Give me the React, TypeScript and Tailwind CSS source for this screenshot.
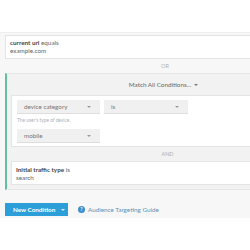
function Caret({ className = '' }: { className?: string }) {
  return <span className={`inline-block w-0 h-0 border-l-[2px] border-r-[2px] border-t-[2.5px] border-l-transparent border-r-transparent ${className}`} />;
}

function Select({ label, width }: { label: string; width: string }) {
  return (
    <div className={`${width} h-[14px] bg-[#f0f0f0] border-b border-[#dedede] flex items-center justify-between pl-[7px] pr-[9px] text-[#777]`}>
      <span>{label}</span>
      <Caret className="border-t-[#999]" />
    </div>
  );
}

export default function App() {
  return (
    <div className="w-[250px] h-[250px] overflow-hidden bg-white pt-[32px] text-[6.3px] leading-[8px] text-[#666]" style={{ fontFamily: 'Lato, "Open Sans", sans-serif' }}>
      <div className="w-[330px] bg-[#f7f7f7] border-t border-[#efefef] pl-[5px] pr-[5px] pt-[2px] h-[186px]">
        <div className="w-[320px]">
          {/* first condition */}
          <div className="bg-white border border-[#e4e4e4] h-[24px] px-[4px] pt-[3px]">
            <div><span className="font-bold text-[#444]">current url</span> equals</div>
            <div>example.com</div>
          </div>

          <div className="h-[14px] flex items-center justify-center text-[#b0b0b0] text-[5.5px]">OR</div>

          {/* match group */}
          <div className="bg-[#f2f2f2] border border-[#e6e6e6] border-l-[2px] border-l-[#62bfa0] pl-[4px] pb-[4px]">
            <div className="h-[21px] flex items-center justify-center gap-[3px] text-[#666] pr-[8px]">
              <span>Match All Conditions...</span>
              <Caret className="border-t-[#777]" />
            </div>
            <div className="bg-white border border-[#e4e4e4] px-[5px] pt-[4px] pb-[3px]">
              <div className="flex gap-[4px]">
                <Select label="device category" width="w-[83px]" />
                <Select label="is" width="w-[84px]" />
              </div>
              <div className="text-[4.8px] leading-[6px] text-[#b0b0b0] mt-[3px]">The user's type of device.</div>
              <div className="mt-[6px]">
                <Select label="mobile" width="w-[83px]" />
              </div>
            </div>
            <div className="h-[14px] flex items-center justify-center text-[#b0b0b0] text-[5.5px]">AND</div>
            <div className="bg-white border border-[#e4e4e4] h-[24px] px-[4px] pt-[4px]">
              <div><span className="font-bold text-[#444]">Initial traffic type</span> is</div>
              <div>search</div>
            </div>
          </div>

          {/* actions */}
          <div className="flex items-center mt-[13px]">
            <div className="h-[13px] w-[63px] bg-[#2c9fd9] text-white font-bold flex items-center">
              <span className="pl-[8px] w-[52px]">New Condition</span>
              <span className="flex-1 flex items-center justify-center">
                <Caret className="border-t-white/80" />
              </span>
            </div>
            <div className="flex items-center gap-[3px] ml-[10px] text-[#5a93b8]">
              <span className="w-[7px] h-[7px] rounded-full bg-[#3b8fcb] text-white text-[5px] leading-[7px] font-bold flex items-center justify-center">?</span>
              <span>Audience Targeting Guide</span>
            </div>
          </div>
        </div>
      </div>
    </div>
  );
}
